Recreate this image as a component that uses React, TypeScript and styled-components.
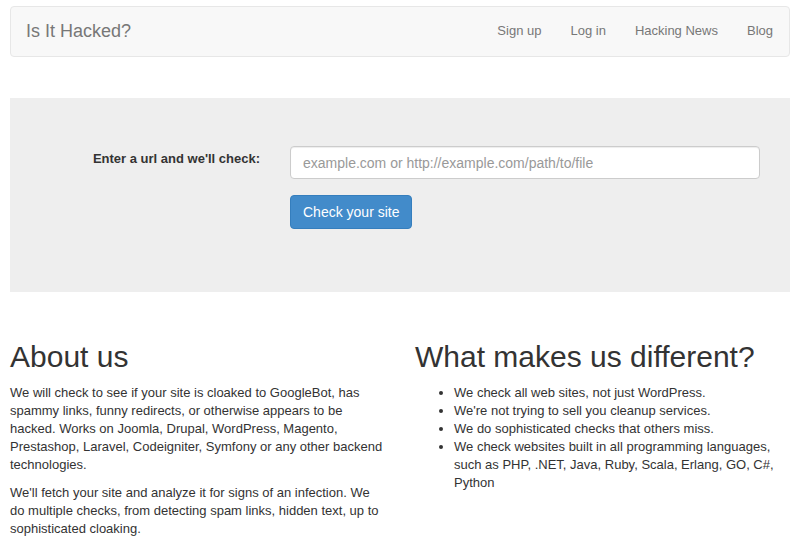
import styled, { createGlobalStyle } from "styled-components";

const GlobalStyle = createGlobalStyle`
  * {
    box-sizing: border-box;
  }
  body {
    margin: 0;
    background: #fff;
    font-family: "Liberation Sans", Arial, Helvetica, sans-serif;
    font-size: 13px;
    line-height: 18px;
    color: #333;
  }
`;

const Page = styled.div`
  padding: 6px 10px 0;
`;

const Navbar = styled.nav`
  height: 51px;
  display: flex;
  align-items: center;
  justify-content: space-between;
  padding: 0 16px 2px 15px;
  background: #f8f8f8;
  border: 1px solid #e7e7e7;
  border-radius: 4px;
`;

const Brand = styled.a`
  font-size: 18px;
  color: #777;
  text-decoration: none;
`;

const NavLinks = styled.ul`
  display: flex;
  gap: 29px;
  margin: 0;
  padding: 0;
  list-style: none;
`;

const NavLink = styled.a`
  font-size: 13px;
  color: #777;
  text-decoration: none;
`;

const Jumbotron = styled.section`
  margin-top: 41px;
  height: 194px;
  background: #eee;
  padding: 49px 30px 0;
`;

const FormRow = styled.div`
  display: grid;
  grid-template-columns: 220px 1fr;
  column-gap: 30px;
  row-gap: 15px;
  align-items: start;
`;

const Label = styled.label`
  justify-self: end;
  padding-top: 3px;
  font-weight: bold;
  font-size: 13px;
  color: #333;
`;

const UrlInput = styled.input`
  width: 100%;
  height: 33px;
  margin-top: -1px;
  padding: 6px 12px;
  border: 1px solid #ccc;
  border-radius: 4px;
  background: #fff;
  box-shadow: inset 0 1px 1px rgba(0, 0, 0, 0.075);
  font-family: inherit;
  font-size: 14px;
  color: #555;

  &::placeholder {
    color: #999;
  }
`;

const Button = styled.button`
  grid-column: 2;
  justify-self: start;
  height: 34px;
  margin-top: 1px;
  padding: 0 12px;
  border: 1px solid #357ebd;
  border-radius: 4px;
  background: #428bca;
  color: #fff;
  font-family: inherit;
  font-size: 14px;
  cursor: pointer;
`;

const Columns = styled.div`
  display: grid;
  grid-template-columns: 377px 1fr;
  column-gap: 28px;
  margin-top: 47px;
`;

const Heading = styled.h1`
  margin: 0 0 9px;
  font-size: 30px;
  font-weight: 500;
  line-height: 36px;
  color: #333;
`;

const Para = styled.p`
  margin: 0 0 10px;
`;

const List = styled.ul`
  margin: 0;
  padding-left: 39px;
`;

export default function App() {
  return (
    <>
      <GlobalStyle />
      <Page>
        <Navbar>
          <Brand href="#">Is It Hacked?</Brand>
          <NavLinks>
            <li><NavLink href="#">Sign up</NavLink></li>
            <li><NavLink href="#">Log in</NavLink></li>
            <li><NavLink href="#">Hacking News</NavLink></li>
            <li><NavLink href="#">Blog</NavLink></li>
          </NavLinks>
        </Navbar>

        <Jumbotron>
          <FormRow>
            <Label htmlFor="url">Enter a url and we'll check:</Label>
            <UrlInput id="url" placeholder="example.com or http://example.com/path/to/file" />
            <Button>Check your site</Button>
          </FormRow>
        </Jumbotron>

        <Columns>
          <div>
            <Heading>About us</Heading>
            <Para>
              We will check to see if your site is cloaked to GoogleBot, has spammy links, funny
              redirects, or otherwise appears to be hacked. Works on Joomla, Drupal, WordPress,
              Magento, Prestashop, Laravel, Codeigniter, Symfony or any other backend technologies.
            </Para>
            <Para>
              We'll fetch your site and analyze it for signs of an infection. We do multiple checks,
              from detecting spam links, hidden text, up to sophisticated cloaking.
            </Para>
          </div>
          <div>
            <Heading>What makes us different?</Heading>
            <List>
              <li>We check all web sites, not just WordPress.</li>
              <li>We're not trying to sell you cleanup services.</li>
              <li>We do sophisticated checks that others miss.</li>
              <li>
                We check websites built in all programming languages, such as PHP, .NET, Java, Ruby,
                Scala, Erlang, GO, C#, Python
              </li>
            </List>
          </div>
        </Columns>
      </Page>
    </>
  );
}
